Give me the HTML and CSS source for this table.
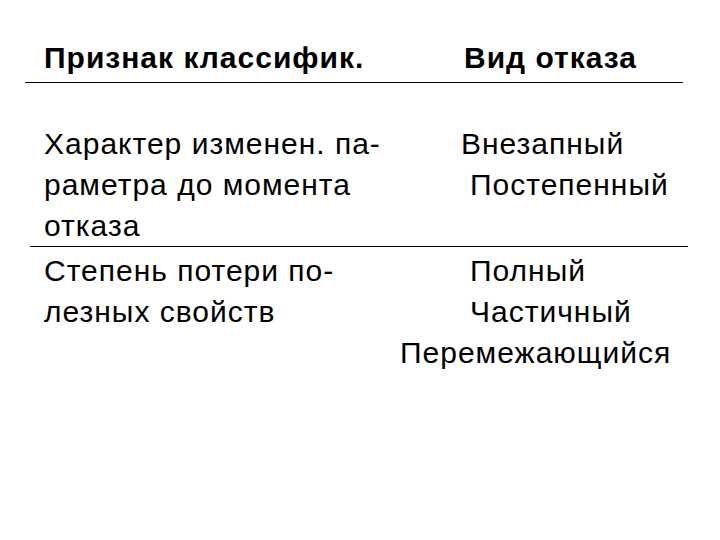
FILE: index.html
```html
<!DOCTYPE html>
<html lang="ru">
<head>
<meta charset="utf-8">
<title>Виды отказов</title>
<link rel="stylesheet" href="styles.css">
</head>
<body>
<div class="slide">
  <div class="table">
    <div class="head">
      <div class="cell-left">Признак классифик.</div>
      <div class="cell-right"><span class="ind-h">Вид отказа</span></div>
    </div>
    <div class="row row-first">
      <div class="cell-left">Характер изменен. па-<br>раметра до момента<br>отказа</div>
      <div class="cell-right">
        <div class="ind-a">Внезапный</div>
        <div class="ind-b">Постепенный</div>
      </div>
    </div>
    <div class="row row-second">
      <div class="cell-left">Степень потери по-<br>лезных свойств</div>
      <div class="cell-right">
        <div class="ind-b">Полный</div>
        <div class="ind-b">Частичный</div>
        <div class="ind-0">Перемежающийся</div>
      </div>
    </div>
  </div>
</div>
</body>
</html>
```

FILE: styles.css
```css
html, body {
  margin: 0;
  padding: 0;
  background: #ffffff;
}

.slide {
  width: 720px;
  height: 540px;
  padding-top: 37px;
  box-sizing: border-box;
  font-family: "Liberation Sans", Arial, sans-serif;
  color: #000000;
  font-size: 30px;
  letter-spacing: 1px;
  line-height: 41px;
}

.table {
  margin-left: 25px;
  width: 663px;
}

.head {
  display: grid;
  grid-template-columns: 375px 1fr;
  width: 658px;
  padding-bottom: 4px;
  border-bottom: 1px solid #000000;
  font-weight: bold;
}

.head .cell-left {
  padding-left: 19px;
}

.row {
  display: grid;
  grid-template-columns: 370px 1fr;
  margin-left: 5px;
  width: 658px;
}

.row .cell-left {
  padding-left: 14px;
}

.row-first {
  margin-top: 40px;
  border-bottom: 1px solid #000000;
}

.row-second {
  padding-top: 3px;
}

.ind-h { padding-left: 64px; }
.ind-a { padding-left: 61px; }
.ind-b { padding-left: 70px; }
.ind-0 { padding-left: 0; }
```
